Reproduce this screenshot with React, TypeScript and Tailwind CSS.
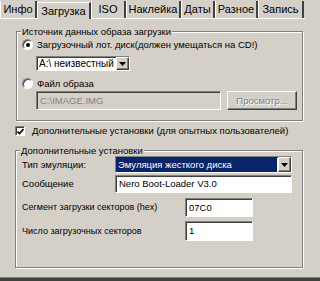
import React from "react";

const etched = "border border-[#808080] shadow-[inset_1px_1px_0_#ffffff,1px_1px_0_#ffffff]";
const sunken = "border border-[#808080] border-r-white border-b-white shadow-[inset_1px_1px_0_#404040]";

function Tab({ label, active, w }: { label: string; active?: boolean; w: string }) {
  return (
    <div
      className={`${w} h-full flex items-center justify-center border-l border-l-white border-r-2 border-r-[#404040] ${
        active ? "bg-[#d4d0c8] border-t border-t-white h-[19px] -mb-[1px] z-10" : ""
      }`}
    >
      <span className="text-[11px] leading-none whitespace-nowrap">{label}</span>
    </div>
  );
}

function Radio({ checked }: { checked?: boolean }) {
  return (
    <div className="w-[11px] h-[11px] rounded-full bg-white border border-[#808080] border-r-white border-b-white shadow-[inset_1px_1px_0_#404040] flex items-center justify-center shrink-0">
      {checked && <div className="w-[4px] h-[4px] rounded-full bg-black" />}
    </div>
  );
}

function Arrow() {
  return (
    <div className="w-[13px] h-full bg-[#d4d0c8] border border-white border-r-[#404040] border-b-[#404040] shadow-[inset_-1px_-1px_0_#808080] flex items-center justify-center shrink-0">
      <svg width="7" height="4" viewBox="0 0 7 4">
        <path d="M0 0H7L3.5 4Z" fill="#000" />
      </svg>
    </div>
  );
}

export default function App() {
  return (
    <div
      className="w-[320px] h-[281px] bg-[#d4d0c8] flex flex-col overflow-hidden text-black text-[9.5px] leading-none whitespace-nowrap"
      style={{ fontFamily: '"Liberation Sans", Arial, sans-serif' }}
    >
      {/* tabs */}
      <div className="h-[18px] flex items-end shrink-0">
        <div className="flex h-[17px] items-end">
          <Tab label="Инфо" w="w-[37px]" />
          <Tab label="Загрузка" w="w-[54px]" active />
          <Tab label="ISO" w="w-[35px]" />
          <Tab label="Наклейка" w="w-[55px]" />
          <Tab label="Даты" w="w-[34px]" />
          <Tab label="Разное" w="w-[43px]" />
          <Tab label="Запись" w="w-[46px]" />
        </div>
      </div>

      <div className="flex-1 flex flex-col pl-[15px] w-[305px] border-t border-white">
        {/* Group 1 */}
        <div className={`relative mt-[12px] ml-[1px] w-[287px] h-[90px] ${etched} flex flex-col pl-[5px] pt-[7px]`}>
          <span className="absolute -top-[6px] left-[4px] bg-[#d4d0c8] px-[1px] leading-[11px]">
            Источник данных образа загрузки
          </span>
          <div className="flex items-center gap-[4px] h-[11px]">
            <Radio checked />
            <span>Загрузочный лот. диск(должен умещаться на CD!)</span>
          </div>
          <div className={`mt-[6px] ml-[14px] w-[94px] h-[15px] bg-white flex items-center ${sunken}`}>
            <span className="flex-1 pl-[2px] text-[10px] overflow-hidden">A:\ неизвестный</span>
            <Arrow />
          </div>
          <div className="flex items-center gap-[4px] h-[11px] mt-[7px]">
            <Radio />
            <span>Файл образа</span>
          </div>
          <div className="flex items-center mt-[2px] ml-[14px] gap-[6px]">
            <div className={`w-[185px] h-[19px] bg-[#d4d0c8] flex items-center pl-[3px] text-[#808080] ${sunken}`}>
              C:\IMAGE.IMG
            </div>
            <div className="w-[70px] h-[19px] border border-white border-r-[#404040] border-b-[#404040] shadow-[inset_-1px_-1px_0_#808080] flex items-center justify-center text-[#808080] [text-shadow:1px_1px_0_#ffffff]">
              Просмотр...
            </div>
          </div>
        </div>

        {/* checkbox */}
        <div className="flex items-center gap-[7px] mt-[5px] h-[10px]">
          <div className="w-[10px] h-[10px] bg-white border border-[#808080] border-r-white border-b-white shadow-[inset_1px_1px_0_#404040] flex items-center justify-center shrink-0">
            <svg width="7" height="7" viewBox="0 0 7 7">
              <path d="M0.5 3.5L2.5 5.5L6.5 1" stroke="#000" strokeWidth="1.6" fill="none" />
            </svg>
          </div>
          <span>Дополнительные установки (для опытных пользователей)</span>
        </div>

        {/* Group 2 */}
        <div className={`relative mt-[14px] w-[288px] h-[118px] ${etched} flex flex-col pl-[6px] pr-[10px] pt-[5px]`}>
          <span className="absolute -top-[6px] left-[4px] bg-[#d4d0c8] px-[1px] leading-[11px]">
            Дополнительные установки
          </span>
          <div className="flex items-center justify-between h-[17px]">
            <span>Тип эмуляции:</span>
            <div className={`w-[177px] h-[17px] bg-white flex items-center ${sunken}`}>
              <span className="flex-1 h-full bg-[#0a246a] text-white flex items-center pl-[2px] mr-[1px]">
                Эмуляция жесткого диска
              </span>
              <Arrow />
            </div>
          </div>
          <div className="flex items-center justify-between h-[18px] mt-[2px]">
            <span>Сообщение</span>
            <div className={`w-[177px] h-[18px] bg-white flex items-center pl-[3px] ${sunken}`}>
              Nero Boot-Loader V3.0
            </div>
          </div>
          <div className="flex items-center h-[19px] mt-[5px]">
            <span className="w-[163px] text-[9px]">Сегмент загрузки секторов (hex)</span>
            <div className={`w-[68px] h-[19px] bg-white flex items-center pl-[3px] ${sunken}`}>07C0</div>
          </div>
          <div className="flex items-center h-[20px] mt-[4px]">
            <span className="w-[163px] text-[9px]">Число загрузочных секторов</span>
            <div className={`w-[68px] h-[20px] bg-white flex items-center pl-[3px] ${sunken}`}>1</div>
          </div>
        </div>

        <div className="flex-1" />
      </div>
      <div className="h-[4px] bg-[#404040] border-t border-[#808080] shrink-0" />
    </div>
  );
}
